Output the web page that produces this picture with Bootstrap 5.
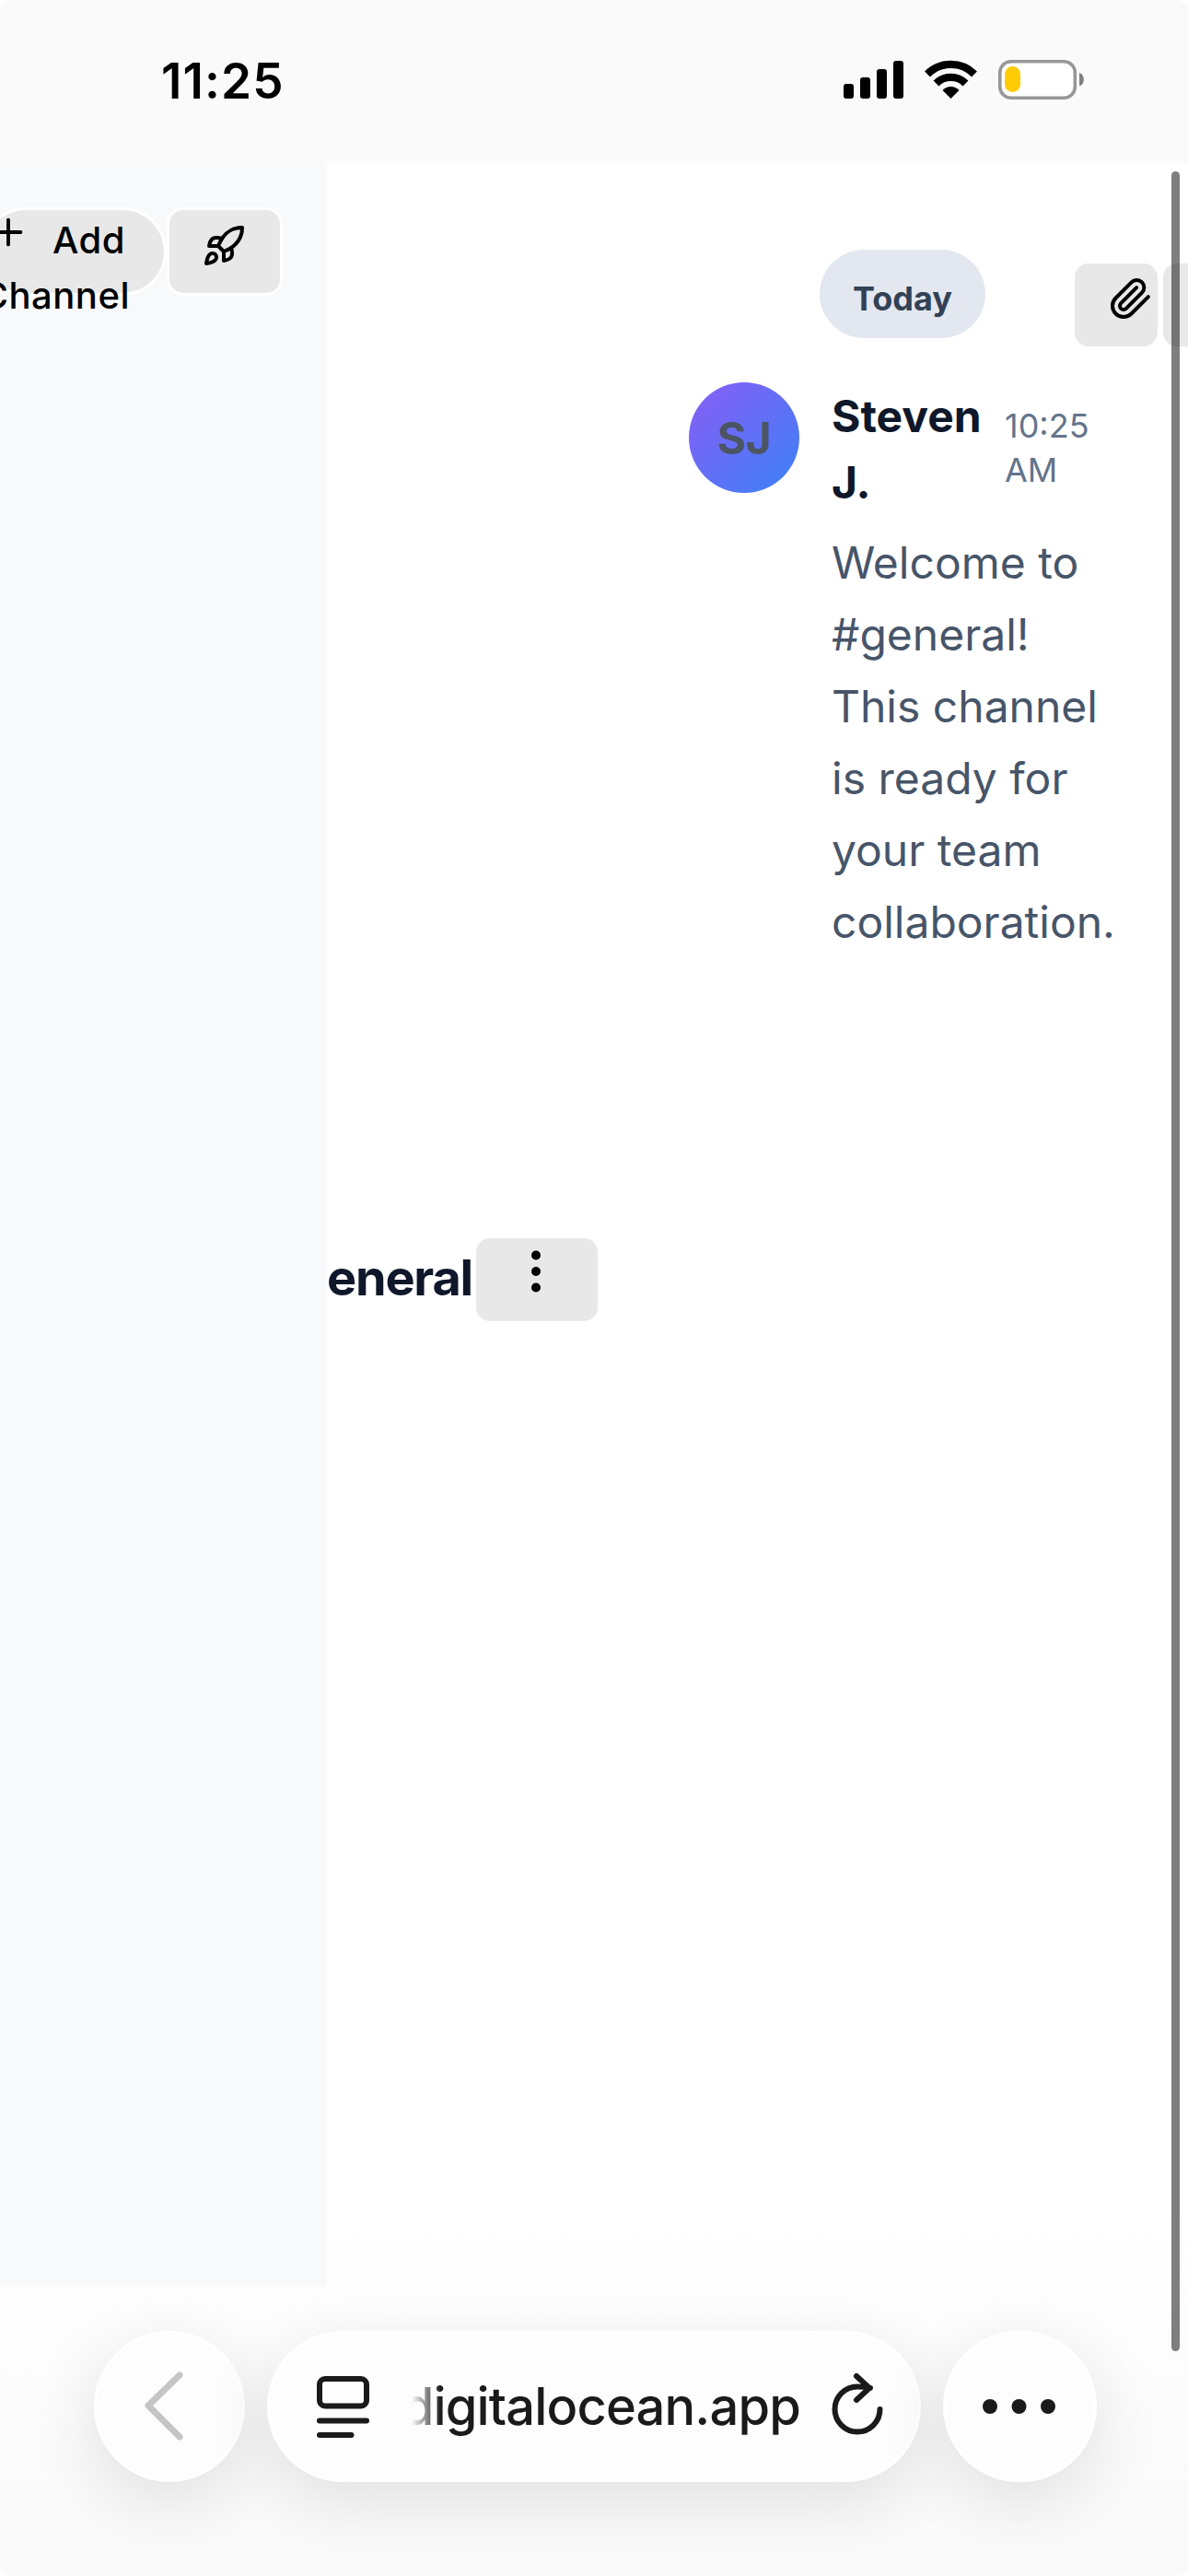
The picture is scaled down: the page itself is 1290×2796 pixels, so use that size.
<!DOCTYPE html>
<html lang="en">
<head>
<meta charset="utf-8">
<meta name="viewport" content="width=device-width, initial-scale=1">
<title>Team chat</title>
<link href="https://cdn.jsdelivr.net/npm/bootstrap@5.3.0/dist/css/bootstrap.min.css" rel="stylesheet">
<style>
  body { width: 1290px; height: 2796px; background: #fff; font-family: Inter, "Liberation Sans", sans-serif; overflow: hidden; color: #000; }
  svg { display: block; flex: none; overflow: visible; }
  .phone { height: 2796px; border-radius: 12px; background: #fff; }
  .status-bar { height: 177px; background: #fafafa; padding: 65px 113px 0 175px; }
  .clock { font-size: 53px; font-weight: 600; line-height: 46px; letter-spacing: 1.1px; }
  .app-page { height: 2305px; }
  .side-panel { width: 355px; background: #f8f9fb; padding-top: 48px; }
  .app-btn { background: #e8e8e8; border: 0; border-radius: 15px; padding: 0; height: 90px; flex: none; }
  .add-btn { width: 201px; height: 96px; margin-left: -20px; border: 3px solid #fff; border-radius: 48px; background: #e8e8e8; background-clip: padding-box; font-size: 40px; font-weight: 500; line-height: 60px; letter-spacing: .5px; }
  .add-first { height: 60px; padding-right: 42px; gap: 25px; margin-top: 3px; }
  .add-second { padding-right: 37px; white-space: nowrap; }
  .rocket-btn { width: 126px; height: 96px; border: 3px solid #fff; border-radius: 18px; padding: 15px 0 0 35px; }
  .channel-head { width: 393px; padding-top: 1165px; }
  .channel-name { width: 158px; font-size: 54px; font-weight: 700; letter-spacing: -1.2px; line-height: 90px; color: #0f172a; }
  .menu-btn { width: 132px; margin: 2px 0 0 4px; padding: 6px 0 0 35px; }
  .thread { width: 419px; padding-top: 94px; }
  .day-pill { width: 180px; height: 96px; margin-left: 142px; border-radius: 48px; background: #e2e7f0; color: #334155; font-size: 36px; font-weight: 700; padding-top: 9px; letter-spacing: 0; }
  .avatar-dot { width: 120px; height: 120px; border-radius: 50%; background: linear-gradient(135deg, #8b5cf6, #3b82f6); color: #4b5563; font-size: 48px; font-weight: 700; letter-spacing: -.5px; flex: none; padding-top: 2px; }
  .post { margin-top: 48px; gap: 35px; }
  .author { font-size: 48px; font-weight: 700; line-height: 72px; color: #0f172a; width: 164px; flex: none; letter-spacing: 0; padding-top: 1px; }
  .stamp { font-size: 36px; line-height: 48px; color: #64748b; padding-top: 23px; margin-left: 24px; }
  .post-text { font-size: 48px; line-height: 78px; color: #475569; margin-top: 12px; white-space: nowrap; }
  .composer { padding-top: 109px; gap: 6px; }
  .clip-btn { width: 90px; padding: 14px 0 0 37px; }
  .next-btn { width: 90px; }
  .browser-bar { height: 314px; padding: 48px 99px 0 102px; gap: 24px; position: relative; }
  .bar-fade { position: absolute; left: 0; right: 0; top: -80px; bottom: 0; background: linear-gradient(rgba(250,250,250,0), rgba(250,250,250,1) 80%); border-radius: 0 0 12px 12px; }
  .glass { position: relative; height: 164px; border-radius: 82px; background: #fdfdfd; border: 3px solid #fff; box-shadow: 0 20px 75px rgba(0,0,0,.11); flex: none; }
  .glass-back { width: 164px; }
  .glass-more { width: 167px; padding-right: 2px; }
  .glass-url { width: 710px; padding: 0 38px 0 51px; }
  .url-text { width: 422px; margin-left: 46px; overflow: hidden; font-size: 56px; font-weight: 500; line-height: 80px; letter-spacing: -.85px; color: #1a1a1a; white-space: nowrap; -webkit-mask-image: linear-gradient(90deg, transparent, #000 32px); mask-image: linear-gradient(90deg, transparent, #000 32px); }
  .scroll-thumb { position: absolute; left: 1272px; top: 186px; width: 9px; height: 2366px; border-radius: 5px; background: rgba(0,0,0,.5); }
</style>
<script src="https://cdn.jsdelivr.net/npm/bootstrap@5.3.0/dist/js/bootstrap.bundle.min.js"></script>
</head>
<body>
<div class="phone d-flex flex-column position-relative overflow-hidden">
  <header class="status-bar d-flex justify-content-between align-items-start">
    <div class="clock">11:25</div>
    <svg width="262" height="43" viewBox="0 0 262 43">
      <rect x="1" y="26" width="11" height="16" rx="3"/><rect x="19" y="19" width="11" height="23" rx="3"/><rect x="37" y="10" width="11" height="32" rx="3"/><rect x="55" y="1" width="11" height="41" rx="3"/>
      <path d="M92 15.500a36 36 0 0 1 51 0M101.500 25.500a22.500 22.500 0 0 1 32 0" fill="none" stroke="#000" stroke-width="8.300"/>
      <path d="M117.500 42l-9-9c5-5.300 13-5.300 18 0z"/>
      <rect x="170.800" y="1.800" width="81.500" height="39.500" rx="12" fill="#fff" stroke="#979797" stroke-width="3.600"/>
      <rect x="176" y="7" width="17" height="28" rx="8.500" fill="#fecb05"/>
      <path d="M257 14c6.500 2 6.500 12.500 0 14.500z" fill="#808080"/>
    </svg>
  </header>

  <div class="app-page d-flex align-items-stretch">
    <aside class="side-panel d-flex align-items-start flex-shrink-0">
      <div class="add-btn flex-shrink-0">
        <div class="add-first d-flex align-items-center justify-content-end">
          <svg width="46" height="46" viewBox="0 0 24 24" fill="none" stroke="#000" stroke-width="2" stroke-linecap="round" transform="translate(0 -9)"><path d="M5 12h14M12 5v14"/></svg>
          <span>Add</span>
        </div>
        <div class="add-second d-flex justify-content-end">Channel</div>
      </div>
      <div class="app-btn rocket-btn" role="button">
        <svg width="48" height="48" viewBox="0 0 24 24" fill="none" stroke="#000" stroke-width="2" stroke-linecap="round" stroke-linejoin="round"><path d="M4.500 16.500c-1.500 1.260-2 5-2 5s3.740-.5 5-2c.71-.84.7-2.130-.09-2.910a2.180 2.180 0 0 0-2.910-.09z"/><path d="m12 15-3-3a22 22 0 0 1 2-3.950A12.880 12.880 0 0 1 22 2c0 2.720-.78 7.500-6 11a22.350 22.350 0 0 1-4 2z"/><path d="M9 12H4s.55-3.030 2-4c1.620-1.080 5 0 5 0"/><path d="M12 15v5s3.030-.55 4-2c1.080-1.620 0-5 0-5"/></svg>
      </div>
    </aside>

    <main class="d-flex flex-grow-1 align-items-start overflow-hidden">
      <div class="channel-head d-flex flex-shrink-0">
        <div class="channel-name text-end">eneral</div>
        <div class="app-btn menu-btn" role="button">
          <svg width="60" height="60" viewBox="0 0 24 24"><circle cx="12" cy="5" r="2"/><circle cx="12" cy="12" r="2"/><circle cx="12" cy="19" r="2"/></svg>
        </div>
      </div>
      <section class="thread flex-shrink-0">
        <div class="day-pill d-flex align-items-center justify-content-center">Today</div>
        <article class="post d-flex">
          <div class="avatar-dot d-flex align-items-center justify-content-center">SJ</div>
          <div>
            <div class="d-flex">
              <div class="author">Steven<br>J.</div>
              <div class="stamp">10:25<br>AM</div>
            </div>
            <div class="post-text">Welcome to<br>#general!<br>This channel<br>is ready for<br>your team<br>collaboration.</div>
          </div>
        </article>
      </section>
      <div class="composer d-flex flex-shrink-0">
        <div class="app-btn clip-btn" role="button">
          <svg width="48" height="48" viewBox="0 0 24 24" fill="none" stroke="#000" stroke-width="2" stroke-linecap="round" stroke-linejoin="round"><path d="m21.440 11.050-9.190 9.190a6 6 0 0 1-8.490-8.490l8.570-8.570A4 4 0 1 1 18 8.840l-8.590 8.570a2 2 0 0 1-2.830-2.830l8.490-8.480"/></svg>
        </div>
        <div class="app-btn next-btn"></div>
      </div>
    </main>
  </div>

  <nav class="browser-bar d-flex align-items-start">
    <div class="bar-fade"></div>
    <div class="glass glass-back d-flex align-items-center justify-content-center">
      <svg width="44" height="76" viewBox="0 0 44 76" fill="none" stroke="#c5c5c7" stroke-width="7" stroke-linecap="round" stroke-linejoin="round"><path d="M33 4 -1 37 33 71"/></svg>
    </div>
    <div class="glass glass-url d-flex align-items-center">
      <svg width="57" height="68" viewBox="0 0 57 68" fill="none" stroke="#1a1a1a" stroke-width="6" stroke-linecap="round"><rect x="3" y="4" width="51" height="29.500" rx="6"/><path d="M3 49.500h51M3 65h34.500"/></svg>
      <div class="url-text d-flex justify-content-end">digitalocean.app</div>
      <svg class="ms-auto" width="56" height="70" viewBox="0 0 56 70" fill="none" stroke="#1a1a1a" stroke-width="6" stroke-linecap="round" stroke-linejoin="round"><path d="M52.500 38a24.500 24.500 0 1 1-24.500-24.500c5 0 9 .5 14 1.500M27 2l14 13-14 13"/></svg>
    </div>
    <div class="glass glass-more d-flex align-items-center justify-content-center">
      <svg width="80" height="16" viewBox="0 0 80 16" fill="#1a1a1a"><circle cx="8" cy="8" r="8"/><circle cx="39.500" cy="8" r="8"/><circle cx="71" cy="8" r="8"/></svg>
    </div>
  </nav>
  <div class="scroll-thumb"></div>
</div>
</body>
</html>
